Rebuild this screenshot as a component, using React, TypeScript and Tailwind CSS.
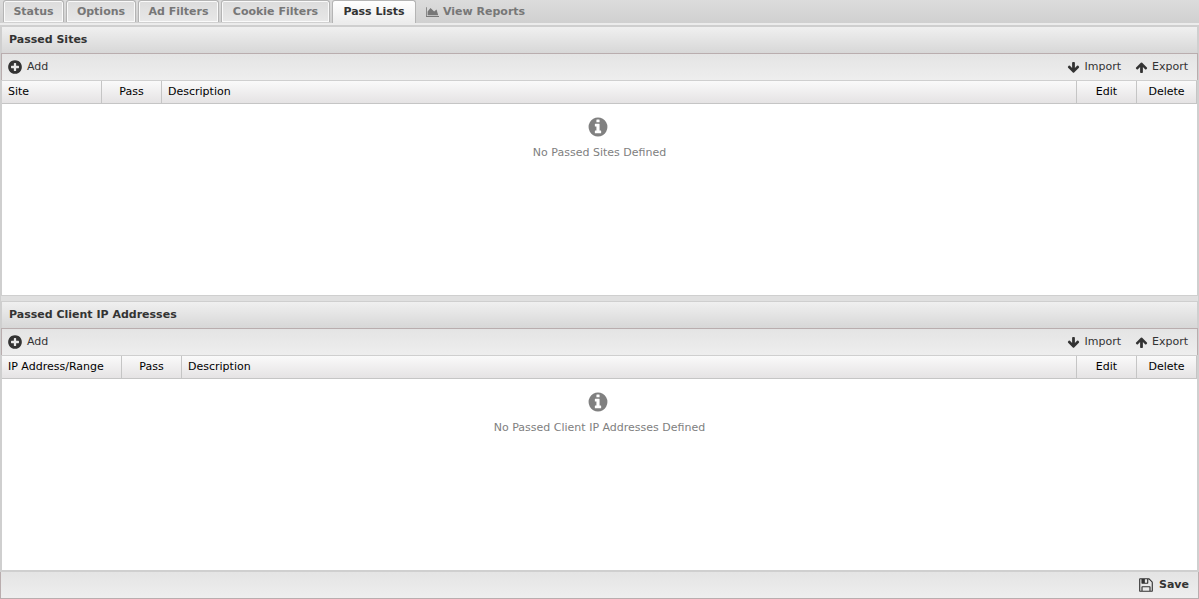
import type { ReactNode } from 'react';
import clsx from 'clsx';

const ICONS = {
  add:
    'M1344 960v-128q0-26-19-45t-45-19h-256v-256q0-26-19-45t-45-19h-128q-26 0-45 19t-19 45v256h-256q-26 0-45 19t-19 45v128q0 26 19 45t45 19h256v256q0 26 19 45t45 19h128q26 0 45-19t19-45v-256h256q26 0 45-19t19-45zm320-64q0 209-103 385.5t-279.5 279.5-385.5 103-385.5-103-279.5-279.5-103-385.5 103-385.5 279.5-279.5 385.5-103 385.5 103 279.5 279.5 103 385.5z',
  down:
    'M1675 832q0 53-37 90l-651 652q-39 37-91 37-53 0-90-37l-651-652q-38-36-38-90 0-53 38-91l74-75q39-37 91-37 53 0 90 37l294 294v-704q0-52 38-90t90-38h128q52 0 90 38t38 90v704l294-294q37-37 90-37 52 0 91 37l75 75q37 39 37 91z',
  up:
    'M1675 971q0 51-37 90l-75 75q-38 38-91 38-54 0-90-38l-294-293v704q0 52-37.5 84.5t-90.5 32.5h-128q-53 0-90.5-32.5t-37.5-84.5v-704l-294 293q-36 38-90 38t-90-38l-75-75q-38-38-38-90 0-53 38-91l651-651q35-37 90-37 54 0 91 37l651 651q37 39 37 91z',
  info:
    'M1152 1376v-160q0-14-9-23t-23-9h-96v-512q0-14-9-23t-23-9h-320q-14 0-23 9t-9 23v160q0 14 9 23t23 9h96v320h-96q-14 0-23 9t-9 23v160q0 14 9 23t23 9h448q14 0 23-9t9-23zm-128-896v-160q0-14-9-23t-23-9h-192q-14 0-23 9t-9 23v160q0 14 9 23t23 9h192q14 0 23-9t9-23zm640 416q0 209-103 385.5t-279.5 279.5-385.5 103-385.5-103-279.5-279.5-103-385.5 103-385.5 279.5-279.5 385.5-103 385.5 103 279.5 279.5 103 385.5z',
  save:
    'M512 1536h768v-384h-768v384zm896 0h128v-896q0-14-10-38.5t-20-34.5l-281-281q-10-10-34-20t-39-10v416q0 40-28 68t-68 28h-576q-40 0-68-28t-28-68v-416h-128v1280h128v-416q0-40 28-68t68-28h832q40 0 68 28t28 68v416zm-384-928v-320q0-13-9.5-22.5t-22.5-9.5h-192q-13 0-22.5 9.5t-9.5 22.5v320q0 13 9.5 22.5t22.5 9.5h192q13 0 22.5-9.5t9.5-22.5zm640 32v928q0 40-28 68t-68 28h-1344q-40 0-68-28t-28-68v-1344q0-40 28-68t68-28h928q40 0 88 20t76 48l280 280q28 28 48 76t20 88z',
};

function Icon({ name, className }: { name: keyof typeof ICONS; className: string }) {
  return (
    <svg viewBox="0 0 1792 1792" fill="currentColor" className={className} aria-hidden="true">
      <path d={ICONS[name]} />
    </svg>
  );
}

const tabs = [
  { label: 'Status', width: 'w-[61px]' },
  { label: 'Options', width: 'w-[70px]' },
  { label: 'Ad Filters', width: 'w-[81px]' },
  { label: 'Cookie Filters', width: 'w-[109px]' },
  { label: 'Pass Lists', width: 'w-[84px]' },
];

function TabBar({ active }: { active: string }) {
  return (
    <nav className="flex h-[23px] shrink-0 gap-0.5 bg-linear-to-b from-[#dcdcdc] to-[#d0d0d0] pl-[3px] font-bold">
      {tabs.map(({ label, width }) => (
        <button
          key={label}
          className={clsx(
            'rounded-t-[3px] border border-b-0 border-[#b4b4b4] leading-[20px] whitespace-nowrap',
            width,
            label === active
              ? 'bg-linear-to-b from-white to-[#ececec] text-[#333] inset-shadow-[0_1px_0_0_#ffffff]'
              : 'mb-px bg-linear-to-b from-[#dcdcdc] to-[#e8e8e8] text-[#777] inset-shadow-[0_0_0_1px_#fafafa]'
          )}
        >
          {label}
        </button>
      ))}
      <button className="flex items-center gap-1 px-2 leading-[20px] text-[#777]">
        <svg viewBox="0 0 2048 1792" fill="currentColor" className="h-[12px] w-[13px]" aria-hidden="true">
          <path d="M2048 1536v128h-2048v-1536h128v1408h1920zm-384-1024l256 896h-1664v-576l448-576 576 576z" />
        </svg>
        View Reports
      </button>
    </nav>
  );
}

function ToolButton({ icon, children }: { icon: ReactNode; children: string }) {
  return (
    <button className="flex items-center gap-1 text-[#333]">
      {icon}
      <span className="pb-px">{children}</span>
    </button>
  );
}

interface PanelProps {
  title: string;
  firstColumn: string;
  firstWidth: string;
  emptyText: string;
}

function ListPanel({ title, firstColumn, firstWidth, emptyText }: PanelProps) {
  const th = 'border-r border-[#c5c5c5] p-0 font-normal';

  return (
    <section className="flex min-h-0 flex-1 flex-col">
      <h2 className="mx-0.5 h-[26px] bg-linear-to-b from-[#f0f0f0] to-[#d7d7d7] px-[7px] leading-[26px] font-bold text-[#333]">
        {title}
      </h2>

      {/* Toolbar */}
      <div className="mx-px flex h-[27px] items-center justify-between border-x border-t border-[#b9adae] bg-linear-to-b from-[#e4e4e4] to-[#eeeeee] pr-[9px] pl-[5px]">
        <ToolButton icon={<Icon name="add" className="size-4" />}>Add</ToolButton>
        <div className="flex gap-[14px]">
          <ToolButton icon={<Icon name="down" className="size-[13px]" />}>Import</ToolButton>
          <ToolButton icon={<Icon name="up" className="size-[13px]" />}>Export</ToolButton>
        </div>
      </div>

      {/* Grid */}
      <div className="mx-0.5 min-h-0 flex-1 border-t border-[#cfcfcf] bg-white">
        <table className="w-full table-fixed border-separate border-spacing-0 text-black">
          <thead>
            <tr className="h-[23px] bg-linear-to-b from-[#fafafa] to-[#e4e2e3] leading-[22px] *:border-b">
              <th className={clsx(th, firstWidth, 'pl-1.5 text-left')}>{firstColumn}</th>
              <th className={clsx(th, 'w-[60px] text-center')}>Pass</th>
              <th className={clsx(th, 'pl-1.5 text-left')}>Description</th>
              <th className={clsx(th, 'w-[60px] text-center')}>Edit</th>
              <th className={clsx(th, 'w-[60px] text-center')}>Delete</th>
            </tr>
          </thead>
          <tbody>
            <tr>
              <td colSpan={5} className="px-0 pt-3 text-center text-[#808080]">
                <Icon name="info" className="mr-1 inline-block size-[22px]" />
                <p className="mt-[7px] leading-[16px]">{emptyText}</p>
              </td>
            </tr>
          </tbody>
        </table>
      </div>
    </section>
  );
}

export default function App() {
  return (
    <div className="flex h-screen flex-col bg-[#cfcfcf] font-['DejaVu_Sans',sans-serif] text-[11px] leading-[14px]">
      <TabBar active="Pass Lists" />
      <div className="h-0.5 shrink-0 bg-[#ececec]" />

      <main className="flex min-h-0 flex-1 flex-col pt-0.5">
        <ListPanel
          title="Passed Sites"
          firstColumn="Site"
          firstWidth="w-[100px]"
          emptyText="No Passed Sites Defined"
        />
        <div className="mx-px h-[7px] shrink-0 border-y border-[#cfcfcf] bg-[#e0e0e0]" />
        <ListPanel
          title="Passed Client IP Addresses"
          firstColumn="IP Address/Range"
          firstWidth="w-[120px]"
          emptyText="No Passed Client IP Addresses Defined"
        />
      </main>

      <footer className="mt-0.5 flex h-[27px] shrink-0 items-center justify-end border-x border-b border-[#b9adae] bg-linear-to-b from-[#e4e4e4] to-[#eeeeee] pr-[9px]">
        <button className="flex items-center gap-[5px] font-bold text-[#333]">
          <Icon name="save" className="size-4" />
          <span className="pb-px">Save</span>
        </button>
      </footer>
    </div>
  );
}
